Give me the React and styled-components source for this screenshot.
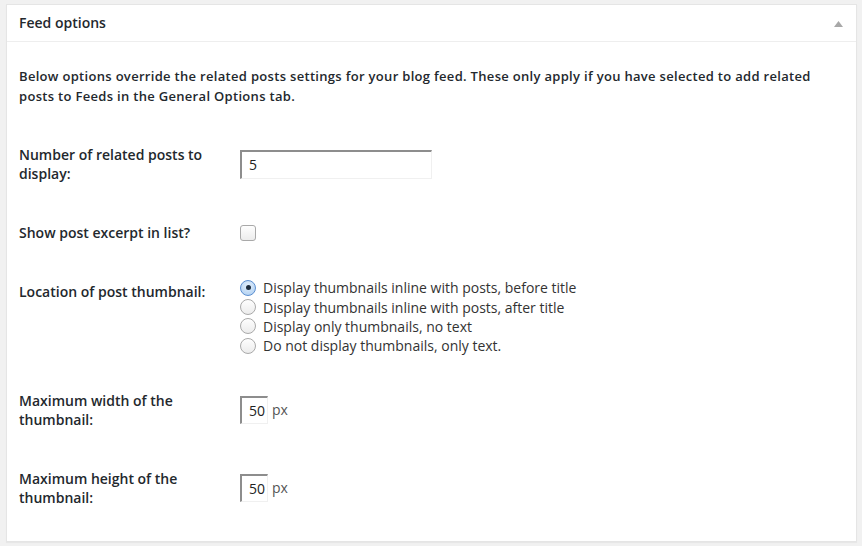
import React from "react";
import styled, { createGlobalStyle } from "styled-components";

const GlobalStyle = createGlobalStyle`
  html, body {
    margin: 0;
    padding: 0;
    background: #f1f1f1;
  }
  body {
    font-family: "Open Sans", "Noto Sans", sans-serif;
    color: #444;
  }
`;

const Page = styled.div`
  padding: 4px 5px 4px 6px;
`;

const Postbox = styled.div`
  background: #fff;
  border: 1px solid #e5e5e5;
  box-shadow: 0 1px 1px rgba(0, 0, 0, 0.04);
`;

const Handle = styled.div`
  display: flex;
  align-items: center;
  justify-content: space-between;
  height: 36px;
  padding: 0 13px 0 12px;
  border-bottom: 1px solid #eee;
`;

const Title = styled.h3`
  margin: 0;
  font-size: 14px;
  font-weight: 600;
  color: #23282d;
  line-height: 1.4;
`;

const Toggle = styled.svg`
  display: block;
  margin-top: 1px;
`;

const Inside = styled.div`
  padding: 0 12px 14px;
`;

const Intro = styled.p`
  margin: 25px 0 19px;
  font-size: 13px;
  font-weight: 600;
  letter-spacing: 0.31px;
  line-height: 19.5px;
  color: #23282d;
`;

const Row = styled.div`
  display: flex;
  align-items: center;
`;

const Label = styled.div`
  align-self: flex-start;
  flex: 0 0 200px;
  padding: 20px 10px 20px 0;
  font-size: 14px;
  font-weight: 600;
  line-height: 19px;
  color: #23282d;
`;

const Field = styled.div`
  padding: 15px 10px 15px 11px;
  font-size: 14px;
  color: #333;
`;

const TextInput = styled.input`
  box-sizing: border-box;
  width: ${(p) => p.$width}px;
  height: ${(p) => p.$height}px;
  margin: 0;
  padding: 0 ${(p) => (p.$small ? 2 : 7)}px 0 7px;
  border: 1px solid #f0f0f0;
  border-top: 2px solid #8d8d8d;
  border-left: 2px solid #8d8d8d;
  border-radius: 0;
  background: #fff;
  font-family: "Open Sans", "Noto Sans", sans-serif;
  font-size: 14px;
  color: #222;
  outline: none;
`;

const Unit = styled.span`
  margin-left: 4px;
  font-size: 14px;
  color: #555;
  line-height: 28px;
`;

const Inline = styled.div`
  display: flex;
  align-items: center;
`;

const Checkbox = styled.span`
  display: block;
  box-sizing: border-box;
  width: 16px;
  height: 16px;
  margin: 1px 0 0;
  border: 1px solid #a9a9a9;
  border-radius: 3px;
  background: linear-gradient(#fefefe, #ececec);
`;

const Choices = styled.div`
  display: flex;
  flex-direction: column;
  padding-top: 1px;
`;

const Choice = styled.label`
  display: flex;
  align-items: center;
  gap: 7px;
  height: 19.4px;
  font-size: 14px;
  color: #333;
  white-space: nowrap;
`;

const Radio = styled.span`
  position: relative;
  display: block;
  box-sizing: border-box;
  width: 16px;
  height: 16px;
  border-radius: 50%;
  border: 1px solid ${(p) => (p.$checked ? "#5c8fd0" : "#a9a9a9")};
  background: ${(p) =>
    p.$checked
      ? "radial-gradient(circle at 50% 35%, #e3f0fd, #a9cbef)"
      : "linear-gradient(#fefefe, #ececec)"};

  &::after {
    content: "";
    display: ${(p) => (p.$checked ? "block" : "none")};
    position: absolute;
    left: 50%;
    top: 50%;
    width: 5px;
    height: 5px;
    margin: -2.5px 0 0 -2.5px;
    border-radius: 50%;
    background: #1c2b3d;
  }
`;

const options = [
  "Display thumbnails inline with posts, before title",
  "Display thumbnails inline with posts, after title",
  "Display only thumbnails, no text",
  "Do not display thumbnails, only text.",
];

export default function App() {
  return (
    <Page>
      <GlobalStyle />
      <Postbox>
        <Handle>
          <Title>Feed options</Title>
          <Toggle width="9" height="6" viewBox="0 0 9 6">
            <polygon points="4.5,0 9,6 0,6" fill="#a8a8a8" />
          </Toggle>
        </Handle>
        <Inside>
          <Intro>
            Below options override the related posts settings for your blog
            feed. These only apply if you have selected to add related posts to
            Feeds in the General Options tab.
          </Intro>

          <Row>
            <Label>Number of related posts to display:</Label>
            <Field>
              <TextInput $width={192} $height={29} defaultValue="5" />
            </Field>
          </Row>

          <Row>
            <Label>Show post excerpt in list?</Label>
            <Field>
              <Checkbox />
            </Field>
          </Row>

          <Row>
            <Label>Location of post thumbnail:</Label>
            <Field>
              <Choices>
                {options.map((o, i) => (
                  <Choice key={o}>
                    <Radio $checked={i === 0} />
                    {o}
                  </Choice>
                ))}
              </Choices>
            </Field>
          </Row>

          <Row>
            <Label>Maximum width of the thumbnail:</Label>
            <Field>
              <Inline>
                <TextInput $width={28} $height={28} $small defaultValue="50" />
                <Unit>px</Unit>
              </Inline>
            </Field>
          </Row>

          <Row>
            <Label>Maximum height of the thumbnail:</Label>
            <Field>
              <Inline>
                <TextInput $width={28} $height={28} $small defaultValue="50" />
                <Unit>px</Unit>
              </Inline>
            </Field>
          </Row>
        </Inside>
      </Postbox>
    </Page>
  );
}
